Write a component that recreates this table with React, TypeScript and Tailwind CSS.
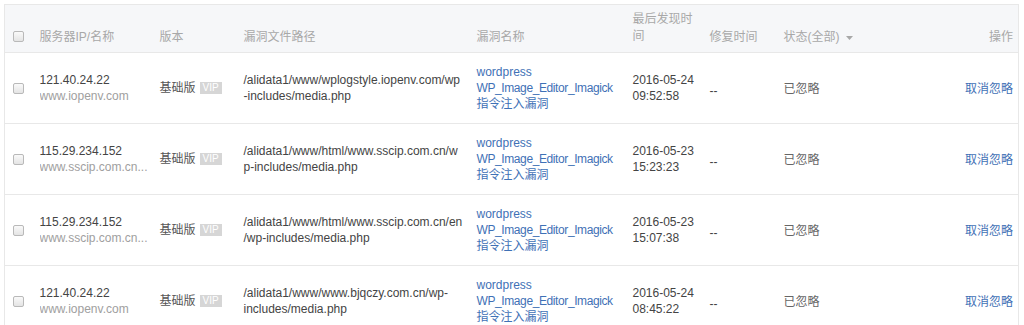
import React from "react";

type Row = {
  ip: string;
  host: string;
  path: string[];
  time: string[];
};

const rows: Row[] = [
  {
    ip: "121.40.24.22",
    host: "www.iopenv.com",
    path: ["/alidata1/www/wplogstyle.iopenv.com/wp", "-includes/media.php"],
    time: ["2016-05-24", "09:52:58"],
  },
  {
    ip: "115.29.234.152",
    host: "www.sscip.com.cn...",
    path: ["/alidata1/www/html/www.sscip.com.cn/w", "p-includes/media.php"],
    time: ["2016-05-23", "15:23:23"],
  },
  {
    ip: "115.29.234.152",
    host: "www.sscip.com.cn...",
    path: ["/alidata1/www/html/www.sscip.com.cn/en", "/wp-includes/media.php"],
    time: ["2016-05-23", "15:07:38"],
  },
  {
    ip: "121.40.24.22",
    host: "www.iopenv.com",
    path: ["/alidata1/www/www.bjqczy.com.cn/wp-", "includes/media.php"],
    time: ["2016-05-24", "08:45:22"],
  },
];

function Checkbox() {
  return (
    <span className="block h-[11px] w-[11px] rounded-[2px] border border-[#b9b9b9] bg-gradient-to-b from-[#fafafa] to-[#e4e4e4]" />
  );
}

export default function App() {
  return (
    <div
      className="min-h-screen bg-white pl-1 pt-1 text-[12px] leading-[16px] text-[#444]"
      style={{ fontFamily: '"Liberation Sans", "Noto Sans CJK SC", sans-serif' }}
    >
      <table className="w-[1014px] table-fixed border-collapse border border-[#e8e8e8]">
        <colgroup>
          <col className="w-[27px]" />
          <col className="w-[120px]" />
          <col className="w-[84px]" />
          <col className="w-[233px]" />
          <col className="w-[156px]" />
          <col className="w-[77px]" />
          <col className="w-[74px]" />
          <col className="w-[125px]" />
          <col className="w-[118px]" />
        </colgroup>

        {/* ── Header ───────────────────────────────────────────── */}
        <thead>
          <tr className="h-[48px] border-b border-[#e8e8e8] bg-[#f6f7f9] text-left text-[#a8a8a8]">
            <th className="pb-[10px] pl-2 align-bottom font-normal">
              <Checkbox />
            </th>
            <th className="pb-[7px] pl-2 align-bottom font-normal">服务器IP/名称</th>
            <th className="pb-[7px] pl-2 align-bottom font-normal">版本</th>
            <th className="pb-[7px] pl-2 align-bottom font-normal">漏洞文件路径</th>
            <th className="pb-[7px] pl-2 align-bottom font-normal">漏洞名称</th>
            <th className="pb-[7px] pl-2 align-bottom font-normal leading-[17px]">
              最后发现时
              <br />
              间
            </th>
            <th className="pb-[7px] pl-2 align-bottom font-normal">修复时间</th>
            <th className="pb-[7px] pl-2 align-bottom font-normal">
              <span className="inline-flex items-center gap-[6px]">
                状态(全部)
                <svg width="7" height="4" viewBox="0 0 7 4" className="mt-[1px]">
                  <path d="M0 0h7L3.5 4z" fill="#a8a8a8" />
                </svg>
              </span>
            </th>
            <th className="pb-[7px] pr-[5px] text-right align-bottom font-normal">操作</th>
          </tr>
        </thead>

        {/* ── Rows ─────────────────────────────────────────────── */}
        <tbody>
          {rows.map((r, i) => (
            <tr key={i} className="h-[71px] border-b border-[#e8e8e8]">
              <td className="pl-2 align-middle">
                <Checkbox />
              </td>
              <td className="pl-2 align-middle">
                <p className="text-[#444]">{r.ip}</p>
                <p className="truncate text-[#a0a0a0]">{r.host}</p>
              </td>
              <td className="pl-2 align-middle">
                <span className="inline-flex items-center gap-[4px] text-[#555]">
                  基础版
                  <span className="inline-block h-[12px] bg-[#d6d6d6] px-[3px] text-[10px] leading-[12px] text-white">
                    VIP
                  </span>
                </span>
              </td>
              <td className="pl-2 align-middle">
                {r.path.map((l) => (
                  <p key={l} className="whitespace-nowrap">{l}</p>
                ))}
              </td>
              <td className="pl-2 align-middle text-[#3f71b6]">
                <p>wordpress</p>
                <p className="tracking-[-0.4px]">WP_Image_Editor_Imagick</p>
                <p>指令注入漏洞</p>
              </td>
              <td className="pl-2 align-middle">
                <p>{r.time[0]}</p>
                <p>{r.time[1]}</p>
              </td>
              <td className="pl-2 pt-[6px] align-middle">--</td>
              <td className="pl-2 pt-[2px] align-middle text-[#666]">已忽略</td>
              <td className="pr-[5px] pt-[2px] text-right align-middle text-[#3f71b6]">取消忽略</td>
            </tr>
          ))}
        </tbody>
      </table>
    </div>
  );
}
